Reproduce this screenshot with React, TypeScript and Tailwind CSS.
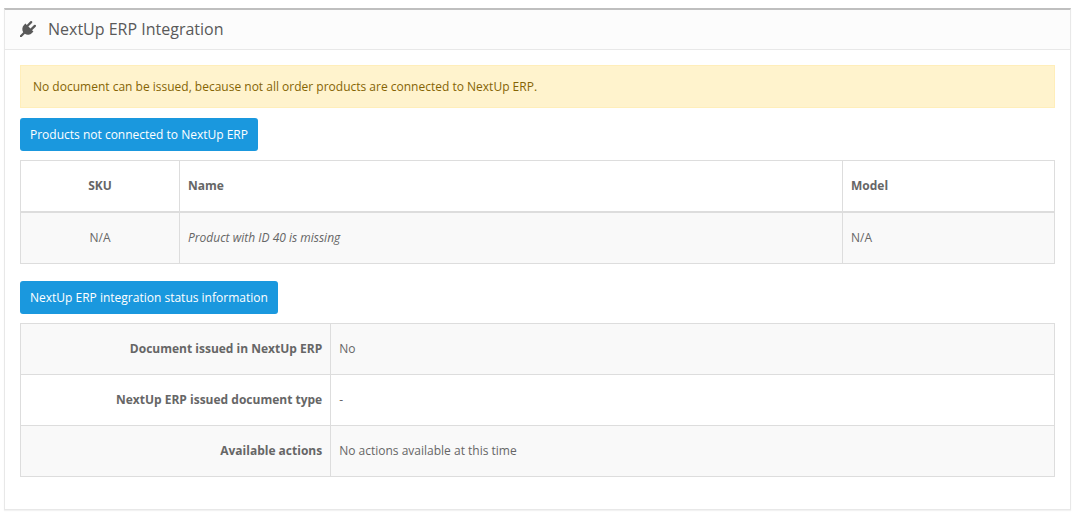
import React from "react";

const products = [{ sku: "N/A", name: "Product with ID 40 is missing", model: "N/A" }];

const statusRows = [
  { label: "Document issued in NextUp ERP", value: "No" },
  { label: "NextUp ERP issued document type", value: "-" },
  { label: "Available actions", value: "No actions available at this time" },
];

function PlugIcon() {
  return (
    <svg viewBox="0 0 1792 1792" className="size-4 fill-current" aria-hidden="true">
      <path d="M1755 453q37 38 37 90.500t-37 90.500l-401 400 150 150-160 160q-163 163-389.500 186.500t-411.500-100.500l-362 362h-181v-181l362-362q-124-185-100.500-411.500t186.500-389.500l160-160 150 150 400-401q38-37 91-37t90 37 37 90.500-37 90.500l-400 401 234 234 401-400q38-37 91-37t90 37z" />
    </svg>
  );
}

function ActionButton({ children }: { children: React.ReactNode }) {
  return (
    <button
      type="button"
      className="block rounded-[3px] bg-[#1a98de] px-[10px] py-2 text-xs leading-[17px] text-white"
    >
      {children}
    </button>
  );
}

export default function App() {
  return (
    <main className="bg-white pt-2 pr-[7px] pb-2 pl-1 font-['Open_Sans',sans-serif] text-xs leading-[17px] text-[#666]">
      <section className="border border-t-2 border-[#e8e8e8] border-t-[#bfbfbf] shadow-[0_1px_1px_rgba(0,0,0,0.05)]">
        <header className="flex h-10 items-center gap-3 border-b border-[#e8e8e8] bg-[#fcfcfc] px-[15px] pb-0.5 text-[#595959]">
          <PlugIcon />
          <h1 className="text-base">NextUp ERP Integration</h1>
        </header>
        <div className="px-[15px] pt-[15px] pb-8">
          <div role="alert" className="mb-[10px] border border-[#ffeeba] bg-[#fff3cd] p-3 text-[#856404]">
            No document can be issued, because not all order products are connected to NextUp ERP.
          </div>
          <ActionButton>Products not connected to NextUp ERP</ActionButton>
          <table className="mt-[9px] mb-[17px] w-full table-fixed border-collapse border border-[#ddd]">
            <colgroup>
              <col className="w-[159px]" />
              <col />
              <col className="w-[212px]" />
            </colgroup>
            <thead>
              <tr className="h-[51px] border-b-2 border-[#ddd]">
                <th className="border-r border-[#ddd] px-2 text-center">SKU</th>
                <th className="border-r border-[#ddd] px-2 text-left">Name</th>
                <th className="px-2 text-left">Model</th>
              </tr>
            </thead>
            <tbody>
              {products.map((p) => (
                <tr key={p.name} className="h-[52px] bg-[#f9f9f9]">
                  <td className="border-r border-[#ddd] px-2 text-center">{p.sku}</td>
                  <td className="border-r border-[#ddd] px-2 italic">{p.name}</td>
                  <td className="px-2">{p.model}</td>
                </tr>
              ))}
            </tbody>
          </table>
          <ActionButton>NextUp ERP integration status information</ActionButton>
          <table className="mt-[9px] w-full table-fixed border-collapse border border-[#ddd] leading-[18px]">
            <colgroup>
              <col className="w-[30%]" />
              <col />
            </colgroup>
            <tbody>
              {statusRows.map((row) => (
                <tr key={row.label} className="h-[51px] border-b border-[#ddd] odd:bg-[#f9f9f9]">
                  <th scope="row" className="border-r border-[#ddd] px-2 text-right">{row.label}</th>
                  <td className="px-2">{row.value}</td>
                </tr>
              ))}
            </tbody>
          </table>
        </div>
      </section>
    </main>
  );
}
